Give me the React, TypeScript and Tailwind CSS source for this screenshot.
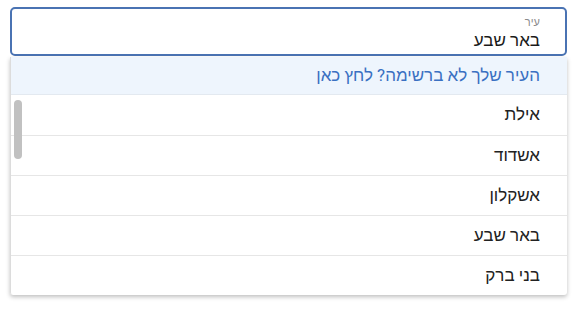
import { useState } from 'react'

const cities = ['אילת', 'אשדוד', 'אשקלון', 'באר שבע', 'בני ברק']

export default function App() {
  const [value, setValue] = useState('באר שבע')

  return (
    <div dir="rtl" className="w-[581px] h-[314px] bg-white pt-[7px] pl-[10px] pr-[14px] font-[Roboto,sans-serif]">
      <div className="relative">
        <label className="flex flex-col h-[49px] border-2 border-[#4a73b3] rounded-[5px] pr-[25px] pl-3 pt-[7px]">
          <span className="text-[11px] leading-[13px] text-[#8a8a8a]">עיר</span>
          <input
            autoFocus
            value={value}
            onChange={(e) => setValue(e.target.value)}
            className="text-[17px] leading-[22px] text-[#1a1a1a] outline-none bg-transparent caret-[#2a4f8f] font-[inherit]"
          />
        </label>

        <div className="relative mt-px shadow-[0_2px_4px_rgba(0,0,0,0.25)] border-l border-[#dcdcdc] rounded-b-[3px] overflow-hidden">
          <div className="h-[38px] flex items-center pr-[27px] bg-[#eef5fd] text-[#3a70c2] text-[17px] border-b border-[#e3e9f0]">
            העיר שלך לא ברשימה? לחץ כאן
          </div>
          {cities.map((city, i) => (
            <div
              key={city}
              className={`h-[40px] flex items-center pr-[27px] text-[17px] text-[#222] ${
                i > 0 ? 'border-t border-[#e6e6e6]' : ''
              }`}
            >
              {city}
            </div>
          ))}
          <div className="absolute left-[3px] top-[43px] w-[8px] h-[59px] rounded-full bg-[#c1c1c1]" />
        </div>
      </div>
    </div>
  )
}
